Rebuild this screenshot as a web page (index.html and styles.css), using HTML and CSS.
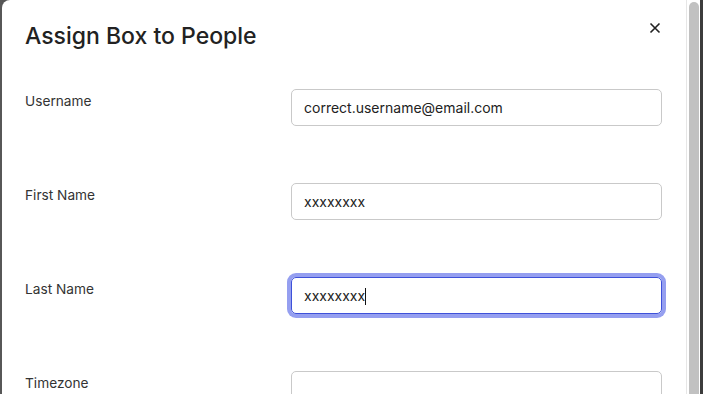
FILE: index.html
```html
<!doctype html>
<html>
<head>
<meta charset="utf-8">
<title>Assign Box to People</title>
<link rel="stylesheet" href="styles.css">
</head>

<body>
	<div class="screen">
		<div class="backdrop"></div>
		<div class="modal">
			<div class="modalBody">
				<div class="modalHead">
					<h1 class="title">Assign Box to People</h1>
					<a href="javascript:;" class="close">
						<svg width="12" height="12" viewBox="0 0 12 12"><path d="M1.5 1.5L10.5 10.5M10.5 1.5L1.5 10.5" stroke="#222" stroke-width="1.6" fill="none"/></svg>
					</a>
				</div>
				<div class="form">
					<label class="label">Username</label>
					<div class="field">correct.username@email.com</div>
					<label class="label">First Name</label>
					<div class="field">xxxxxxxx</div>
					<label class="label">Last Name</label>
					<div class="field focus">xxxxxxxx<span class="caret"></span></div>
					<label class="label">Timezone</label>
					<div class="field"></div>
				</div>
			</div>
			<div class="scrollbar"><div class="thumb"></div></div>
		</div>
		<div class="backdrop right"></div>
	</div>
</body>
</html>
```

FILE: styles.css
```css
html,body{ margin:0; padding:0; height:100%; overflow:hidden;}
body{ background:#555; font-family:Inter,"Liberation Sans",sans-serif; color:#222;}
.screen{ display:flex; height:394px;}
.backdrop{ width:2px; background:#575757;}
.backdrop.right{ width:3px; background:#3c3c3c;}
.modal{ flex:1; display:flex; background:#fff; border-top-left-radius:8px; overflow:hidden;}
.modalBody{ flex:1; padding:22px 24px 0 23px;}
.modalHead{ display:flex; justify-content:space-between; align-items:flex-start;}
.title{ margin:0; font-size:23px; line-height:29px; font-weight:500; color:#222;}
.close{ display:block; width:12px; height:12px; margin:0 1px 0 0; position:relative; top:0px;}
.close svg{ display:block;}
.form{ display:grid; grid-template-columns:266px 1fr; row-gap:57px; margin-top:38px;}
.label{ font-size:13.7px; line-height:18px; color:#333; padding-top:3px;}
.field{ height:37px; box-sizing:border-box; border:1px solid #c9c9c9; border-radius:5px; padding:0 12px; font-size:14px; line-height:35px; color:#222; white-space:nowrap;}
.field.focus{ border-color:#3e51d9; box-shadow:0 0 0 4px #959ff0;}
.caret{ display:inline-block; width:1px; height:17px; background:#111; vertical-align:-4px;}
.scrollbar{ width:10px; border-left:1px solid #e6e6e6; padding:2px 1px 0 2px; background:#fff;}
.thumb{ height:600px; background:#c1c1c1; border-radius:5px;}
```
